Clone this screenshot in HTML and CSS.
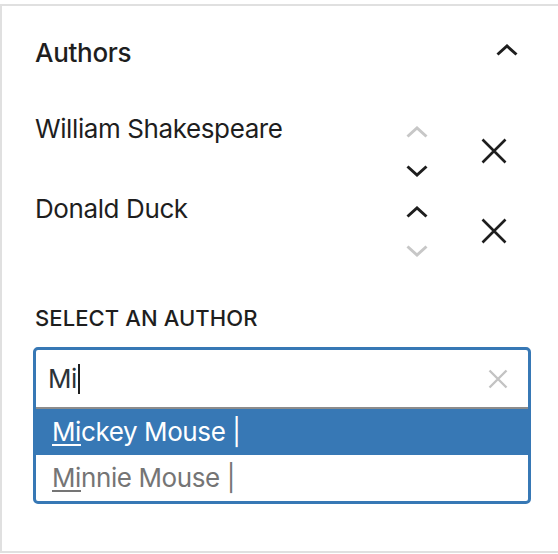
FILE: index.html
```html
<!DOCTYPE html>
<html lang="en">
<head>
<meta charset="utf-8">
<title>Authors</title>
<link rel="stylesheet" href="styles.css">
</head>
<body>
<div class="panel">
  <div class="panel-header">
    <h2 class="panel-title">Authors</h2>
    <span class="toggle">
      <svg width="22" height="12" viewBox="0 0 22 12"><polyline points="1.5,10.5 11,2 20.5,10.5" /></svg>
    </span>
  </div>
  <div class="panel-body">
    <ul class="author-list">
      <li class="author">
        <span class="author-name">William Shakespeare</span>
        <div class="movers">
          <span class="mover is-disabled"><svg width="22" height="12" viewBox="0 0 22 12"><polyline points="1.5,10.5 11,2 20.5,10.5" /></svg></span>
          <span class="mover"><svg width="22" height="12" viewBox="0 0 22 12"><polyline points="1.5,1.5 11,10 20.5,1.5" /></svg></span>
        </div>
        <span class="remove"><svg width="26" height="26" viewBox="0 0 26 26"><path d="M1.5 1.5 L24.5 24.5 M24.5 1.5 L1.5 24.5" /></svg></span>
      </li>
      <li class="author">
        <span class="author-name">Donald Duck</span>
        <div class="movers">
          <span class="mover"><svg width="22" height="12" viewBox="0 0 22 12"><polyline points="1.5,10.5 11,2 20.5,10.5" /></svg></span>
          <span class="mover is-disabled"><svg width="22" height="12" viewBox="0 0 22 12"><polyline points="1.5,1.5 11,10 20.5,1.5" /></svg></span>
        </div>
        <span class="remove"><svg width="26" height="26" viewBox="0 0 26 26"><path d="M1.5 1.5 L24.5 24.5 M24.5 1.5 L1.5 24.5" /></svg></span>
      </li>
    </ul>
    <label class="select-label">Select an author</label>
    <div class="combo">
      <div class="combo-input">
        <span class="combo-value">Mi<span class="caret"></span></span>
        <span class="combo-clear"><svg width="20" height="20" viewBox="0 0 20 20"><path d="M1.5 1.5 L18.5 18.5 M18.5 1.5 L1.5 18.5" /></svg></span>
      </div>
      <ul class="combo-menu">
        <li class="option is-active"><span class="match">Mi</span>ckey Mouse |</li>
        <li class="option"><span class="match">Mi</span>nnie Mouse |</li>
      </ul>
    </div>
  </div>
</div>
</body>
</html>
```

FILE: styles.css
```css
* { box-sizing: border-box; }

html, body {
  margin: 0;
  padding: 0;
  background: #ffffff;
}

body {
  font-family: "Inter", "Noto Sans", sans-serif;
  color: #1e1e1e;
  overflow: hidden;
}

.panel {
  margin-top: 4px;
  width: 580px;
  border-top: 2px solid #e0e0e0;
  border-left: 2px solid #e0e0e0;
  border-bottom: 2px solid #e0e0e0;
}

.panel-header {
  height: 94px;
  display: flex;
  align-items: center;
  justify-content: space-between;
  padding-left: 33px;
  width: 556px;
}

.panel-title {
  margin: 0;
  font-size: 26px;
  font-weight: 500;
  line-height: 32px;
  letter-spacing: -0.3px;
  color: #1e1e1e;
}

.toggle {
  display: flex;
  margin-right: 40px;
  margin-bottom: 6px;
}

.toggle svg polyline,
.mover svg polyline {
  fill: none;
  stroke: #1e1e1e;
  stroke-width: 3;
  stroke-linecap: butt;
  stroke-linejoin: miter;
}

.panel-body {
  padding: 12px 0 47px 33px;
  width: 556px;
}

.author-list {
  list-style: none;
  margin: 0;
  padding: 0;
}

.author {
  display: flex;
  align-items: flex-start;
  height: 80px;
  padding-right: 40px;
}

.author-name {
  flex: 1;
  font-size: 26px;
  line-height: 34px;
  letter-spacing: -0.4px;
  color: #1e1e1e;
}

.movers {
  display: flex;
  flex-direction: column;
  width: 48px;
}

.mover {
  height: 39px;
  display: flex;
  align-items: center;
  justify-content: center;
}

.mover.is-disabled svg polyline {
  stroke: #c7c7c7;
}

.remove {
  width: 48px;
  height: 78px;
  margin-left: 29px;
  display: flex;
  align-items: center;
  justify-content: center;
}

.remove svg path {
  stroke: #1e1e1e;
  stroke-width: 2.6;
  fill: none;
}

.select-label {
  display: block;
  margin-top: 33px;
  font-size: 22px;
  line-height: 26px;
  font-weight: 500;
  text-transform: uppercase;
  letter-spacing: 0.1px;
  color: #1e1e1e;
}

.combo {
  margin-top: 16px;
  margin-left: -2px;
  width: 498px;
  border: 3px solid #3778b5;
  border-radius: 5px;
  overflow: hidden;
  background: #ffffff;
}

.combo-input {
  height: 59px;
  display: flex;
  align-items: center;
  justify-content: space-between;
  padding: 0 20px 0 12px;
  border-bottom: 2px solid #8c8c8c;
}

.combo-value {
  font-size: 26px;
  line-height: 32px;
  letter-spacing: -0.4px;
  color: #2c3338;
  display: flex;
  align-items: center;
}

.caret {
  display: inline-block;
  width: 2px;
  height: 30px;
  background: #1e1e1e;
  margin-left: 1px;
}

.combo-clear {
  display: flex;
}

.combo-clear svg path {
  stroke: #c3c3c3;
  stroke-width: 2.4;
  fill: none;
}

.combo-menu {
  list-style: none;
  margin: 0;
  padding: 0;
}

.option {
  height: 46px;
  padding-left: 16px;
  font-size: 26px;
  line-height: 46px;
  letter-spacing: -0.4px;
  color: #757575;
}

.option.is-active {
  background: #3778b5;
  color: #ffffff;
}

.match {
  text-decoration: underline;
  text-decoration-thickness: 2px;
  text-underline-offset: 3px;
}
```
